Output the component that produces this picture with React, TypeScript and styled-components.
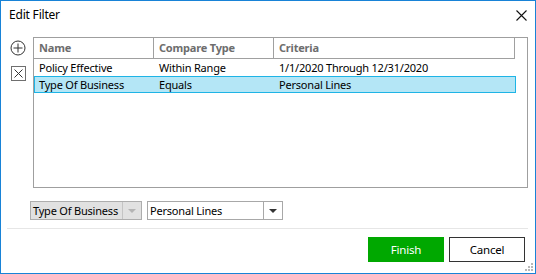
import React from 'react';
import styled, { createGlobalStyle } from 'styled-components';

const GlobalStyle = createGlobalStyle`
  html, body {
    margin: 0;
    padding: 0;
    background: #ffffff;
  }
  * {
    box-sizing: border-box;
  }
`;

const Window = styled.div`
  position: relative;
  width: 536px;
  height: 274px;
  border: 1px solid #1883d7;
  background: #ffffff;
  display: flex;
  flex-direction: column;
  font-family: "Noto Sans", "Open Sans", sans-serif;
  font-size: 11px;
  letter-spacing: -0.2px;
  color: #000000;
`;

const TitleBar = styled.div`
  height: 36px;
  display: flex;
  align-items: flex-start;
  justify-content: space-between;
  padding-left: 8px;
`;

const Title = styled.span`
  font-size: 12px;
  line-height: 16px;
  margin-top: 6px;
`;

const CloseButton = styled.button`
  width: 28px;
  height: 28px;
  border: none;
  background: none;
  padding: 0;
  display: flex;
  align-items: center;
  justify-content: center;
`;

const Body = styled.div`
  display: flex;
  padding-right: 7px;
`;

const SideTools = styled.div`
  width: 32px;
  display: flex;
  flex-direction: column;
  align-items: flex-start;
  padding: 3px 0 0 9px;
  gap: 9px;
`;

const ToolIcon = styled.div`
  width: 16px;
  height: 16px;
  display: flex;
  align-items: center;
  justify-content: center;
`;

const GridBox = styled.div`
  flex: 1;
  height: 151px;
  border: 1px solid #9f9f9f;
  display: flex;
`;

const GridTable = styled.div`
  width: 481px;
  display: flex;
  flex-direction: column;
`;

const Columns = styled.div`
  display: grid;
  grid-template-columns: 120px 120px 241px;
`;

const HeaderRow = styled(Columns)`
  height: 21px;
  border-bottom: 1px solid #a0a0a0;
`;

const HeaderCell = styled.div`
  padding-left: 5px;
  border-right: 1px solid #a0a0a0;
  font-weight: 700;
  color: #6d6d6d;
  line-height: 20px;
`;

const Row = styled(Columns)<{ $selected?: boolean }>`
  height: 17px;
  line-height: 15px;
  border: 1px solid ${p => (p.$selected ? '#1eb4e6' : 'transparent')};
  background: ${p => (p.$selected ? '#b4e6f6' : 'transparent')};
  margin-right: -1px;
`;

const Cell = styled.div`
  padding-left: 4px;
  white-space: nowrap;
`;

const ScrollGutter = styled.div`
  flex: 1;
`;

const ComboRow = styled.div`
  display: flex;
  gap: 5px;
  padding: 13px 0 0 29px;
`;

const Combo = styled.div<{ $disabled?: boolean; $width: number }>`
  width: ${p => p.$width}px;
  height: 19px;
  border: 1px solid ${p => (p.$disabled ? '#adadad' : '#a8a8a8')};
  background: ${p => (p.$disabled ? '#e1e1e1' : '#ffffff')};
  display: flex;
`;

const ComboText = styled.div`
  flex: 1;
  padding-left: 2px;
  line-height: 17px;
  white-space: nowrap;
`;

const ComboArrow = styled.div<{ $disabled?: boolean }>`
  width: 19px;
  border-left: 1px solid ${p => (p.$disabled ? '#c4c4c4' : '#a8a8a8')};
  display: flex;
  align-items: center;
  justify-content: center;

  &::after {
    content: '';
    border-left: 4px solid transparent;
    border-right: 4px solid transparent;
    border-top: 4px solid ${p => (p.$disabled ? '#b4b4b4' : '#333333')};
    margin-top: 1px;
  }
`;

const Separator = styled.div`
  height: 1px;
  background: #e6e6e6;
  margin: 8px 7px 0 6px;
`;

const ButtonRow = styled.div`
  display: flex;
  justify-content: flex-end;
  gap: 5px;
  padding: 8px 10px 0 0;
`;

const DialogButton = styled.button<{ $primary?: boolean }>`
  width: 76px;
  height: 25px;
  font-family: inherit;
  font-size: 11.5px;
  letter-spacing: inherit;
  padding: 0;
  border: 1px solid ${p => (p.$primary ? '#00a800' : '#333333')};
  background: ${p => (p.$primary ? '#00a800' : '#ffffff')};
  color: ${p => (p.$primary ? '#ffffff' : '#000000')};
`;

const ResizeGrip = styled.svg`
  position: absolute;
  right: 1px;
  bottom: 1px;
`;

const rows = [
  { name: 'Policy Effective', compare: 'Within Range', criteria: '1/1/2020 Through 12/31/2020' },
  { name: 'Type Of Business', compare: 'Equals', criteria: 'Personal Lines', selected: true },
];

export default function App() {
  return (
    <>
      <GlobalStyle />
      <Window>
        <TitleBar>
          <Title>Edit Filter</Title>
          <CloseButton aria-label="Close">
            <svg width="11" height="11" viewBox="0 0 11 11">
              <path d="M0.5 0.5 L10.5 10.5 M10.5 0.5 L0.5 10.5" stroke="#111" strokeWidth="1.1" />
            </svg>
          </CloseButton>
        </TitleBar>

        <Body>
          <SideTools>
            <ToolIcon>
              <svg width="16" height="16" viewBox="0 0 16 16">
                <circle cx="8" cy="8" r="7" fill="none" stroke="#333" strokeWidth="1" />
                <path d="M8 3.5 V12.5 M3.5 8 H12.5" stroke="#333" strokeWidth="1" />
              </svg>
            </ToolIcon>
            <ToolIcon>
              <svg width="16" height="16" viewBox="0 0 16 16">
                <rect x="1.5" y="1.5" width="14" height="14" fill="#fff" stroke="#6f6f6f" strokeWidth="1" />
                <path d="M4.5 4.5 L12.5 12.5 M12.5 4.5 L4.5 12.5" stroke="#333" strokeWidth="1" />
              </svg>
            </ToolIcon>
          </SideTools>

          <GridBox>
            <GridTable>
              <HeaderRow>
                <HeaderCell>Name</HeaderCell>
                <HeaderCell>Compare Type</HeaderCell>
                <HeaderCell>Criteria</HeaderCell>
              </HeaderRow>
              {rows.map(r => (
                <Row key={r.name} $selected={r.selected}>
                  <Cell>{r.name}</Cell>
                  <Cell>{r.compare}</Cell>
                  <Cell>{r.criteria}</Cell>
                </Row>
              ))}
            </GridTable>
            <ScrollGutter />
          </GridBox>
        </Body>

        <ComboRow>
          <Combo $disabled $width={112}>
            <ComboText>Type Of Business</ComboText>
            <ComboArrow $disabled />
          </Combo>
          <Combo $width={136}>
            <ComboText>Personal Lines</ComboText>
            <ComboArrow />
          </Combo>
        </ComboRow>

        <Separator />

        <ButtonRow>
          <DialogButton $primary>Finish</DialogButton>
          <DialogButton>Cancel</DialogButton>
        </ButtonRow>

        <ResizeGrip width="9" height="9" viewBox="0 0 9 9">
          <rect x="6" y="0" width="2" height="2" fill="#b8b8b8" />
          <rect x="3" y="3" width="2" height="2" fill="#b8b8b8" />
          <rect x="6" y="3" width="2" height="2" fill="#b8b8b8" />
          <rect x="0" y="6" width="2" height="2" fill="#b8b8b8" />
          <rect x="3" y="6" width="2" height="2" fill="#b8b8b8" />
          <rect x="6" y="6" width="2" height="2" fill="#b8b8b8" />
        </ResizeGrip>
      </Window>
    </>
  );
}
